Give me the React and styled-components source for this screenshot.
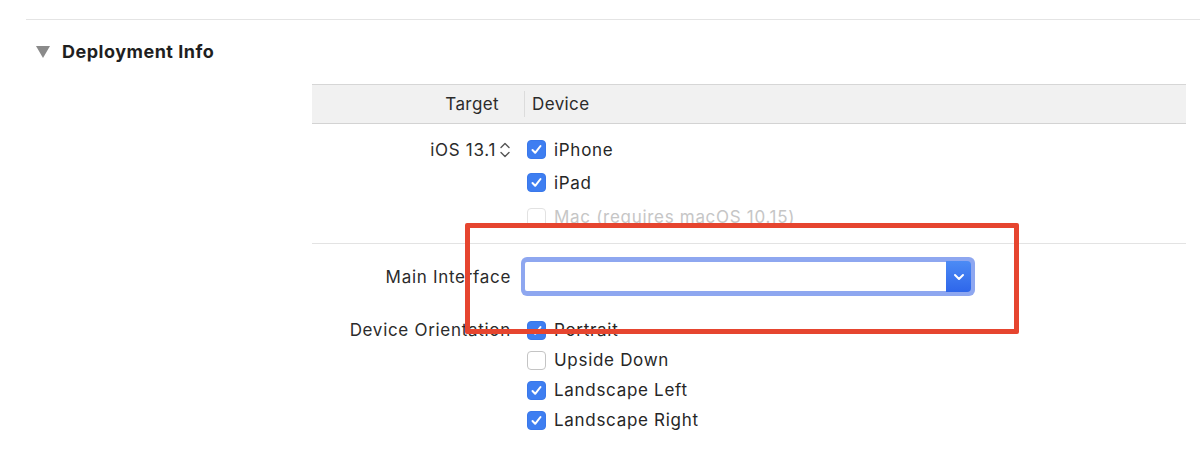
import React from 'react';
import styled, { createGlobalStyle } from 'styled-components';

const GlobalStyle = createGlobalStyle`
  html, body {
    margin: 0;
    padding: 0;
    background: #ffffff;
  }
  body {
    font-family: Inter, "Liberation Sans", sans-serif;
    color: #262626;
    -webkit-font-smoothing: antialiased;
  }
`;

const Page = styled.div`
  position: relative;
  width: 1200px;
  height: 452px;
  overflow: hidden;
  padding-top: 19px;
  box-sizing: border-box;
`;

const TopRule = styled.div`
  margin-left: 26px;
  border-top: 1px solid #e4e4e4;
`;

const SectionHeader = styled.div`
  display: flex;
  align-items: center;
  gap: 12px;
  height: 63px;
  padding-left: 36px;
  box-sizing: border-box;
`;

const Disclosure = styled.span`
  width: 0;
  height: 0;
  border-left: 7px solid transparent;
  border-right: 7px solid transparent;
  border-top: 12px solid #8a8a8a;
`;

const Title = styled.h2`
  margin: 0;
  font-size: 18px;
  font-weight: 700;
  color: #1f1f1f;
  letter-spacing: 0.5px;
`;

const Table = styled.div`
  margin-left: 312px;
  width: 874px;
`;

const HeaderRow = styled.div`
  display: grid;
  grid-template-columns: 212px 1fr;
  height: 40px;
  margin-top: 1px;
  background: #f1f1f1;
  border-top: 1px solid #d6d6d6;
  border-bottom: 1px solid #d3d3d3;
  box-sizing: border-box;
  font-size: 17px;
  letter-spacing: 0.4px;
  color: #2b2b2b;
`;

const HeadCell = styled.div`
  display: flex;
  align-items: center;
  justify-content: ${p => (p.$right ? 'flex-end' : 'flex-start')};
  padding: ${p => (p.$right ? '0 25px 0 0' : '0 0 0 7px')};
  border-left: ${p => (p.$divider ? '1px solid #dcdcdc' : 'none')};
  margin: ${p => (p.$divider ? '6px 0' : '0')};
`;

const Group = styled.div`
  display: grid;
  grid-template-columns: 199px 1fr;
  column-gap: 16px;
  padding: ${p => p.$pad};
  border-bottom: ${p => (p.$rule ? '1px solid #e3e3e3' : 'none')};
`;

const Label = styled.div`
  display: flex;
  align-items: center;
  justify-content: flex-end;
  gap: 3px;
  height: ${p => p.$h}px;
  margin-top: ${p => p.$top || 0}px;
  font-size: 17px;
  letter-spacing: 0.7px;
  color: #2b2b2b;
  white-space: nowrap;
`;

const Options = styled.div`
  display: flex;
  flex-direction: column;
  margin-top: ${p => p.$top || 0}px;
`;

const Option = styled.label`
  display: flex;
  align-items: center;
  gap: 8px;
  height: ${p => p.$h}px;
  font-size: 17px;
  letter-spacing: 0.7px;
  color: ${p => (p.$disabled ? '#c6c6c6' : '#262626')};
  white-space: nowrap;
`;

const Box = styled.span`
  display: flex;
  align-items: center;
  justify-content: center;
  width: 19px;
  height: 19px;
  border-radius: 4px;
  box-sizing: border-box;
  background: ${p => (p.$on ? '#3e7ef1' : '#ffffff')};
  border: 1px solid ${p => (p.$on ? '#3a78ea' : p.$disabled ? '#e2e2e2' : '#c4c4c4')};
`;

const Combo = styled.div`
  display: flex;
  align-items: stretch;
  width: 454px;
  height: 39px;
  margin-left: -6px;
  padding: 4px;
  box-sizing: border-box;
  border-radius: 6px;
  background: #8ea7f0;
`;

const Field = styled.div`
  flex: 1;
  background: #ffffff;
  margin: 1px 0;
  border-radius: 2px 0 0 2px;
`;

const ComboButton = styled.div`
  display: flex;
  align-items: center;
  justify-content: center;
  width: 25px;
  border-radius: 0 4px 4px 0;
  background: linear-gradient(#4c8bf5, #2e66ea);
`;

const Highlight = styled.div`
  position: absolute;
  left: 465px;
  top: 223px;
  width: 554px;
  height: 111px;
  border: 5px solid #e6452f;
  box-sizing: border-box;
  border-radius: 2px;
  pointer-events: none;
`;

const Check = () => (
  <svg width="13" height="13" viewBox="0 0 13 13">
    <path d="M2.5 7 L5.2 9.8 L10.5 3" fill="none" stroke="#fff" strokeWidth="2" strokeLinecap="round" strokeLinejoin="round" />
  </svg>
);

const Stepper = () => (
  <svg width="12" height="18" viewBox="0 0 12 18">
    <path d="M2 6.5 L6 2.5 L10 6.5 M2 11.5 L6 15.5 L10 11.5" fill="none" stroke="#555" strokeWidth="1.4" strokeLinecap="round" strokeLinejoin="round" />
  </svg>
);

const Chevron = () => (
  <svg width="12" height="8" viewBox="0 0 12 8">
    <path d="M2 2 L6 6 L10 2" fill="none" stroke="#fff" strokeWidth="2" strokeLinecap="round" strokeLinejoin="round" />
  </svg>
);

const CheckOption = ({ on, disabled, h, children }) => (
  <Option $h={h} $disabled={disabled}>
    <Box $on={on} $disabled={disabled}>{on && <Check />}</Box>
    {children}
  </Option>
);

const devices = [
  { name: 'iPhone', on: true, h: 33 },
  { name: 'iPad', on: true, h: 33 },
  { name: 'Mac  (requires macOS 10.15)', on: false, disabled: true, h: 36 }
];

const orientations = [
  { name: 'Portrait', on: true },
  { name: 'Upside Down', on: false },
  { name: 'Landscape Left', on: true },
  { name: 'Landscape Right', on: true }
];

export default function App() {
  return (
    <Page>
      <GlobalStyle />
      <TopRule />
      <SectionHeader>
        <Disclosure />
        <Title>Deployment Info</Title>
      </SectionHeader>
      <Table>
        <HeaderRow>
          <HeadCell $right>Target</HeadCell>
          <HeadCell $divider>Device</HeadCell>
        </HeaderRow>
        <Group $pad="9px 0 8px" $rule>
          <Label $h={33}>iOS 13.1<Stepper /></Label>
          <Options>
            {devices.map(d => (
              <CheckOption key={d.name} h={d.h} on={d.on} disabled={d.disabled}>{d.name}</CheckOption>
            ))}
          </Options>
        </Group>
        <Group $pad="13px 0 0">
          <Label $h={39}>Main Interface</Label>
          <div><Combo><Field /><ComboButton><Chevron /></ComboButton></Combo></div>
        </Group>
        <Group $pad="0">
          <Label $h={30} $top={19}>Device Orientation</Label>
          <Options $top={19}>
            {orientations.map(o => (
              <CheckOption key={o.name} h={30} on={o.on}>{o.name}</CheckOption>
            ))}
          </Options>
        </Group>
      </Table>
      <Highlight />
    </Page>
  );
}
